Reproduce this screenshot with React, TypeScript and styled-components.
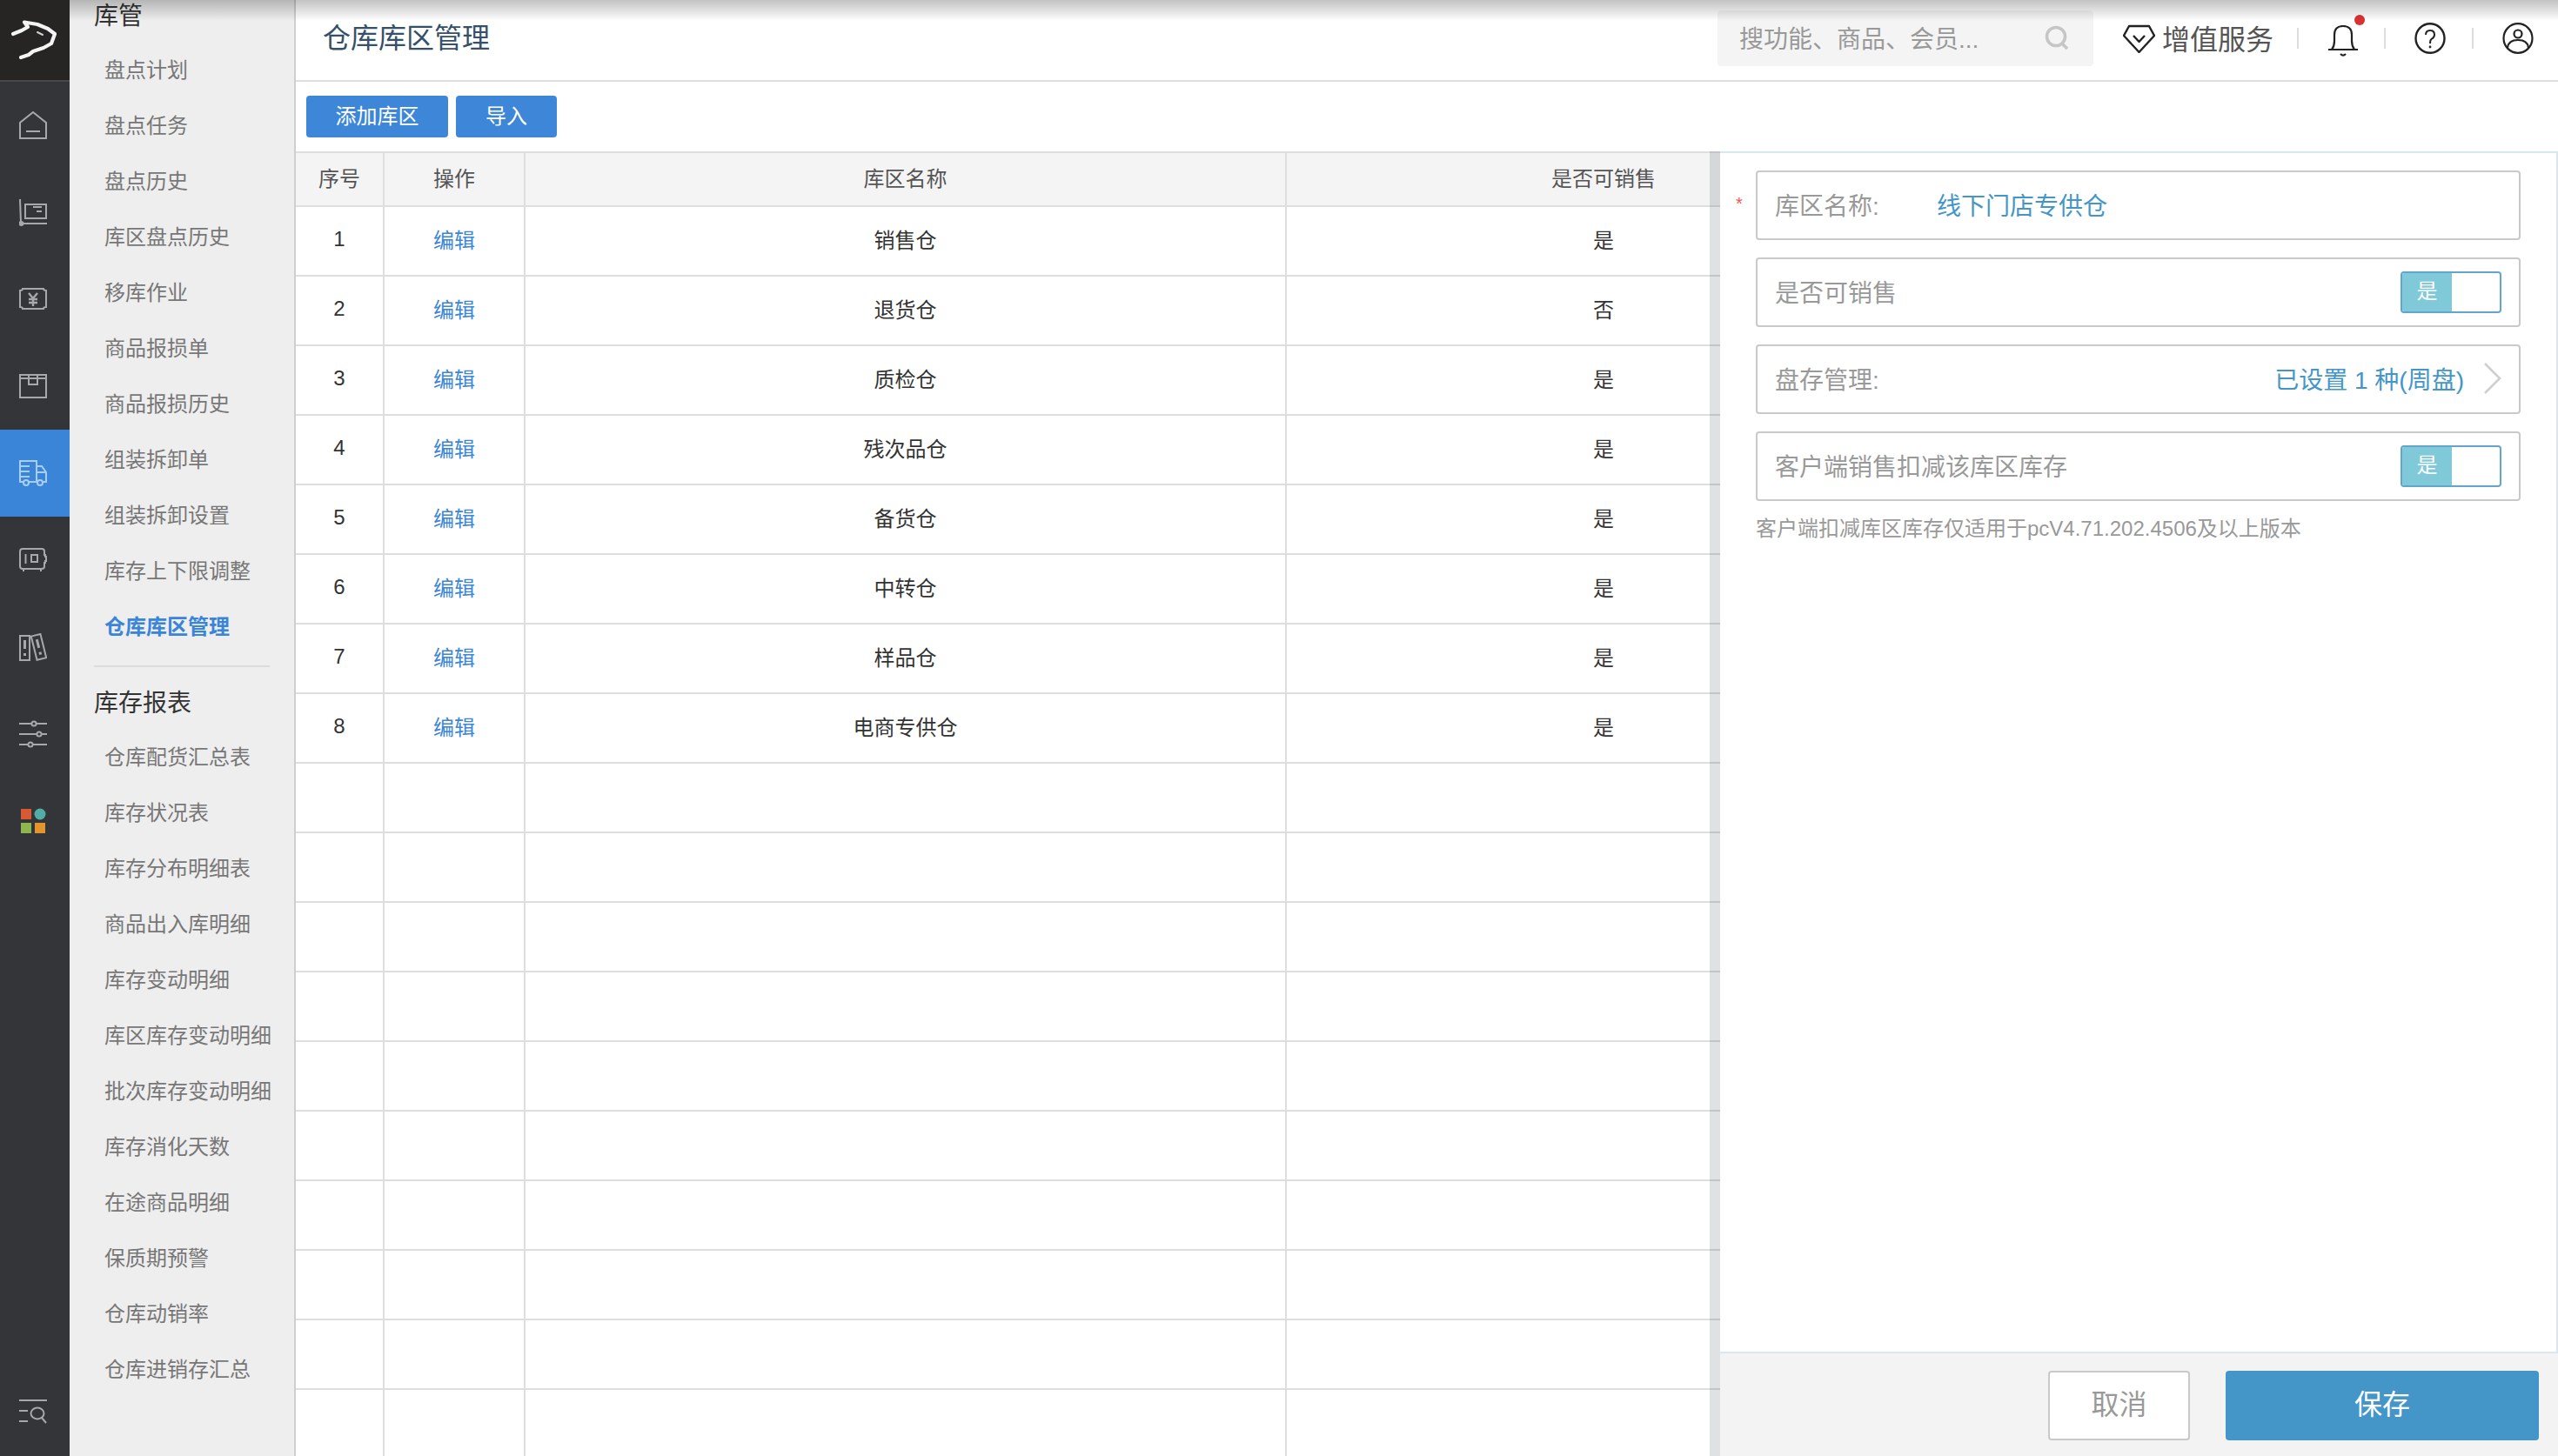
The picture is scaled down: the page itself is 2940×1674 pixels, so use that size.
import React from 'react'
import styled, { createGlobalStyle } from 'styled-components'

const GlobalStyle = createGlobalStyle`
  html, body {
    margin: 0;
    padding: 0;
    background: #fff;
  }
  * {
    box-sizing: border-box;
  }
  body {
    font-family: "Liberation Sans", "Noto Sans CJK SC", sans-serif;
    color: #333;
  }
`

const Page = styled.div`
  display: flex;
  width: 2940px;
  height: 1674px;
  overflow: hidden;
`

const Rail = styled.nav`
  display: flex;
  flex-direction: column;
  flex: 0 0 80px;
  background: #333538;
`

const LogoBox = styled.div`
  display: flex;
  height: 94px;
  background: #262523;
  border-bottom: 2px solid #47484a;
`

const RailItem = styled.div<{ $active?: boolean; $bottom?: boolean }>`
  display: flex;
  align-items: center;
  justify-content: center;
  height: 100px;
  padding-right: 4px;
  margin-top: ${({ $bottom }) => ($bottom ? 'auto' : '0')};
  color: ${({ $active }) => ($active ? '#a9cef3' : '#a6a8aa')};
  background: ${({ $active }) => ($active ? '#3b85d8' : 'transparent')};
`

const Content = styled.div`
  position: relative;
  display: flex;
  flex: 1;
  min-width: 0;

  &::before {
    content: '';
    position: absolute;
    top: 0;
    left: 0;
    right: 0;
    height: 24px;
    background: linear-gradient(to bottom, rgba(0, 0, 0, 0.24), rgba(0, 0, 0, 0));
    pointer-events: none;
    z-index: 2;
  }
`

const Menu = styled.aside`
  flex: 0 0 260px;
  padding-left: 28px;
  background: #eee;
  border-right: 2px solid #cfcfcf;
  overflow: hidden;
`

const MenuTitle = styled.div`
  height: 34px;
  margin-bottom: 15px;
  font-size: 28px;
  line-height: 38px;
  color: #333;
`

const MenuItem = styled.div<{ $active?: boolean }>`
  height: 64px;
  padding-left: 12px;
  font-size: 24px;
  line-height: 64px;
  white-space: nowrap;
  color: ${({ $active }) => ($active ? '#3a85d8' : '#777')};
  font-weight: ${({ $active }) => ($active ? 600 : 400)};
`

const MenuDivider = styled.div`
  width: 202px;
  height: 2px;
  margin: 12px 0 23px;
  background: #dcdcdc;
`

const Main = styled.main`
  display: flex;
  flex-direction: column;
  flex: 1;
  min-width: 0;
`

const Header = styled.header`
  display: flex;
  align-items: center;
  flex: 0 0 94px;
  padding: 0 28px 4px 31px;
  border-bottom: 2px solid #dedede;
`

const Title = styled.h1`
  margin: 0 0 7px;
  font-size: 32px;
  font-weight: 400;
  color: #34506a;
`

const SearchBox = styled.div`
  display: flex;
  align-items: center;
  justify-content: space-between;
  width: 432px;
  height: 64px;
  margin-left: auto;
  padding: 0 28px 3px 25px;
  background: #f4f4f4;
  border-radius: 4px;
  font-size: 28px;
  color: #999;
`

const Upgrade = styled.div`
  display: flex;
  align-items: center;
  gap: 8px;
  margin-left: 34px;
  font-size: 32px;
  color: #555;
  white-space: nowrap;
`

const UpgradeLabel = styled.span`
  padding-bottom: 3px;
`

const HeaderDivider = styled.span<{ $after?: number }>`
  flex: 0 0 2px;
  height: 24px;
  margin: 0 33px 0 ${({ $after }) => $after ?? 29}px;
  background: #ddd;
`

const BellWrap = styled.div`
  position: relative;
  display: flex;
  margin-top: 6px;
`

const RedDot = styled.span`
  position: absolute;
  top: -12px;
  right: -7px;
  width: 12px;
  height: 12px;
  border-radius: 50%;
  background: #dc3232;
`

const Toolbar = styled.div`
  display: flex;
  align-items: flex-start;
  flex: 0 0 80px;
  gap: 9px;
  padding: 16px 0 0 12px;
`

const ToolButton = styled.button<{ $width: number }>`
  width: ${({ $width }) => $width}px;
  height: 48px;
  padding: 0 0 5px;
  border: 0;
  border-radius: 4px;
  background: #3d86d8;
  color: #fff;
  font-family: inherit;
  font-size: 24px;
`

const Workspace = styled.div`
  display: flex;
  flex: 1;
  min-height: 0;
`

const TablePane = styled.div`
  position: relative;
  flex: 0 0 1637px;
  overflow: hidden;
`

const Grid = styled.table`
  width: 1868px;
  table-layout: fixed;
  border-collapse: collapse;
  font-size: 24px;
`

const Col = styled.col<{ $width: number }>`
  width: ${({ $width }) => $width}px;
`

const HeadCell = styled.th`
  height: 62px;
  padding: 0 0 5px;
  background: #f4f4f4;
  border: 2px solid #dedede;
  font-weight: 400;
  color: #555;
  text-align: center;

  &:first-child {
    border-left: 0;
  }
`

const Cell = styled.td`
  height: 80px;
  padding: 0 0 5px;
  border: 2px solid #dedede;
  text-align: center;
  color: #333;

  &:first-child {
    border-left: 0;
  }
`

const EditLink = styled.a`
  color: #3d86d8;
`

/* the drag bar is translucent, the table's lines show through it */
const Splitter = styled.div`
  position: absolute;
  top: 0;
  right: 0;
  bottom: 0;
  width: 12px;
  background: rgba(0, 5, 15, 0.12);
`

const Panel = styled.section`
  display: flex;
  flex-direction: column;
  flex: 1;
  min-width: 0;
`

const FormArea = styled.div`
  display: flex;
  flex-direction: column;
  flex: 1;
  gap: 20px;
  padding: 20px 41px 0 41px;
  border: 2px solid #d9e7ef;
  border-left: 0;
`

const FieldRow = styled.div`
  position: relative;
  display: flex;
  align-items: center;
  height: 80px;
  padding: 0 20px 3px 20px;
  border: 2px solid #c9c9c9;
  border-radius: 4px;
  font-size: 28px;
  color: #999;
`

const Required = styled.span`
  position: absolute;
  left: -25px;
  top: 26px;
  font-size: 20px;
  line-height: 20px;
  color: #f25555;
`

const FieldLabel = styled.span`
  flex: 0 0 186px;
`

const FieldValue = styled.span<{ $end?: boolean }>`
  margin-left: ${({ $end }) => ($end ? 'auto' : '0')};
  color: #4496c8;
`

const ChevronSlot = styled.span`
  display: flex;
  margin-left: 23px;
`

const Toggle = styled.div`
  display: flex;
  width: 116px;
  height: 48px;
  margin: 3px 0 0 auto;
  border: 2px solid #62a6cb;
  border-radius: 4px;
  overflow: hidden;
  background: #fff;
`

const ToggleOn = styled.span`
  flex: 0 0 57px;
  background: #7fc9d9;
  color: #fff;
  font-size: 24px;
  line-height: 42px;
  text-align: center;
`

const Hint = styled.p`
  margin: -6px 0 0;
  font-size: 24px;
  line-height: 36px;
  color: #999;
  white-space: nowrap;
`

const Footer = styled.footer`
  display: flex;
  justify-content: flex-end;
  flex: 0 0 118px;
  gap: 41px;
  padding: 20px 22px 0 0;
  background: #f3f3f3;
`

const CancelButton = styled.button`
  width: 163px;
  height: 80px;
  padding: 0 0 8px;
  border: 2px solid #c9c9c9;
  border-radius: 4px;
  background: #fff;
  color: #999;
  font-family: inherit;
  font-size: 32px;
`

const SaveButton = styled.button`
  width: 360px;
  height: 80px;
  padding: 0 0 8px;
  border: 0;
  border-radius: 4px;
  background: #4496c8;
  color: #fff;
  font-family: inherit;
  font-size: 32px;
`

const LogoIcon = () => (
  <svg width="80" height="92" viewBox="0 0 80 92" fill="none">
    <path
      d="M15 39 L25 35 L32 31 L28 25.500 L43 28 L55 33 L63 39 L59 50 L50 55 L38 59 L33 63 L24 66"
      stroke="#f4f4f4"
      strokeWidth="4.200"
      strokeLinecap="round"
      strokeLinejoin="round"
    />
    <path d="M43 37 L49 40" stroke="#cfcfcf" strokeWidth="2" strokeLinecap="round" />
  </svg>
)

const HomeIcon = () => (
  <svg width="32" height="32" viewBox="0 0 32 32" fill="none" stroke="currentColor" strokeWidth="2">
    <path d="M16 1 L31 13 V31 H1 V13 Z" />
    <path d="M8 23 H24" />
  </svg>
)

const CartIcon = () => (
  <svg width="32" height="32" viewBox="0 0 32 32" fill="none" stroke="currentColor" strokeWidth="2">
    <path d="M1 1 L2 29 H32" />
    <circle cx="2.500" cy="29" r="2" />
    <rect x="7" y="7" width="24" height="16" />
    <path d="M16 10 H26 M20 15 H26" />
  </svg>
)

const MoneyIcon = () => (
  <svg width="32" height="32" viewBox="0 0 32 32" fill="none" stroke="currentColor" strokeWidth="2">
    <path d="M1 6 Q4 6 4 4 H28 Q28 6 31 6 V25 Q28 25 28 27 H4 Q4 25 1 25 Z" />
    <path d="M11 9 L16 15 L21 9 M11 16 H21 M11 20 H21 M16 15 V24" strokeWidth="2.400" />
  </svg>
)

const BoxIcon = () => (
  <svg width="32" height="32" viewBox="0 0 32 32" fill="none" stroke="currentColor" strokeWidth="2">
    <rect x="1" y="3" width="30" height="26" />
    <path d="M1 7 H31 M11 3 V14 H21 V3" />
  </svg>
)

const TruckIcon = () => (
  <svg width="32" height="32" viewBox="0 0 32 32" fill="none" stroke="currentColor" strokeWidth="2">
    <path d="M5 26 H1 V2 H20 V26 H11 M20 8 H26 L31 15 V26 H27 M21 26 H20" />
    <path d="M20 15 H31 M1 8 H12 M1 14 H12 M1 20 H12" />
    <circle cx="8" cy="27" r="3" />
    <circle cx="24" cy="27" r="3" />
  </svg>
)

const SafeIcon = () => (
  <svg width="32" height="32" viewBox="0 0 32 32" fill="none" stroke="currentColor" strokeWidth="2">
    <path d="M31 10 H29 V6 Q29 3 26 3 H4 Q1 3 1 6 V23 Q1 26 4 26 H26 Q29 26 29 23 V19 H31 M29 12 H31 V17 H29" />
    <path d="M7.500 9 V20 M5 26 V29 M25 26 V29" />
    <rect x="14" y="10" width="7" height="8" />
  </svg>
)

const BooksIcon = () => (
  <svg width="32" height="32" viewBox="0 0 32 32" fill="none" stroke="currentColor" strokeWidth="2">
    <rect x="1" y="3" width="11" height="28" />
    <path d="M6.500 8 V18 M6.500 23 V26" strokeWidth="3" />
    <g transform="rotate(-14 22 16)">
      <rect x="17" y="2" width="11" height="28" />
      <path d="M22.500 7 V17 M22.500 22 V25" strokeWidth="3" />
    </g>
  </svg>
)

const SlidersIcon = () => (
  <svg width="32" height="32" viewBox="0 0 32 32" fill="#333538" stroke="currentColor" strokeWidth="2">
    <path d="M0 4 H32 M0 16 H32 M0 28 H32" />
    <circle cx="17" cy="4" r="2.600" />
    <circle cx="23" cy="16" r="2.600" />
    <circle cx="13" cy="28" r="2.600" />
  </svg>
)

const AppsIcon = () => (
  <svg width="32" height="32" viewBox="0 0 32 32">
    <rect x="2" y="2" width="12" height="12" fill="#d85a33" />
    <circle cx="24" cy="8" r="6.500" fill="#51ada6" />
    <rect x="2" y="18" width="12" height="12" fill="#8db64e" />
    <rect x="18" y="18" width="12" height="12" fill="#e2952c" />
  </svg>
)

const MenuSearchIcon = () => (
  <svg width="32" height="32" viewBox="0 0 32 32" fill="none" stroke="currentColor" strokeWidth="2">
    <path d="M0 2 H32 M0 14 H10 M0 26 H10" />
    <ellipse cx="21" cy="17" rx="7.500" ry="6.500" />
    <path d="M26 22 L31 28" />
  </svg>
)

const SearchIcon = () => (
  <svg width="28" height="28" viewBox="0 0 28 28" fill="none" stroke="#c6c6c6" strokeWidth="3.600">
    <circle cx="13" cy="13" r="10.500" />
    <path d="M20 21 L26 27" />
  </svg>
)

const DiamondIcon = () => (
  <svg width="37" height="33" viewBox="0 0 37 33" fill="none" stroke="#222" strokeWidth="2.400" strokeLinejoin="round">
    <path d="M7 2 H30 L36 13 L18.500 32 L1 13 Z" />
    <path d="M12 13 L18.500 20 L25 13" />
  </svg>
)

const BellIcon = () => (
  <svg width="36" height="37" viewBox="0 0 36 37" fill="none" stroke="#222" strokeWidth="2.200">
    <path d="M1 28 H35 M5 28 Q8 24 8 18 V11 Q8 1 18 1 Q28 1 28 11 V18 Q28 24 31 28" />
    <path d="M15 33 Q18 36 21 33" />
  </svg>
)

const QuestionIcon = () => (
  <svg width="36" height="36" viewBox="0 0 36 36" fill="none" stroke="#222" strokeWidth="2.400">
    <ellipse cx="18" cy="18" rx="16.500" ry="16.800" />
    <path d="M13 14 Q13 9 18 9 Q23 9 23 14 Q23 17 19.500 19 Q18 20 18 24" strokeWidth="2" />
    <circle cx="18" cy="28" r="0.800" strokeWidth="1.200" />
  </svg>
)

const UserIcon = () => (
  <svg width="36" height="36" viewBox="0 0 36 36" fill="none" stroke="#222" strokeWidth="2.200">
    <ellipse cx="18" cy="18" rx="16.500" ry="16.800" />
    <circle cx="18" cy="13" r="4.500" />
    <path d="M6 29 Q7 20 18 20 Q29 20 30 29" />
  </svg>
)

const ChevronIcon = () => (
  <svg width="20" height="36" viewBox="0 0 20 36" fill="none" stroke="#cfcfcf" strokeWidth="2.600">
    <path d="M1 1 L18 18 L1 35" />
  </svg>
)

const railIcons = [HomeIcon, CartIcon, MoneyIcon, BoxIcon, TruckIcon, SafeIcon, BooksIcon, SlidersIcon, AppsIcon]

const manageMenu = [
  '盘点计划',
  '盘点任务',
  '盘点历史',
  '库区盘点历史',
  '移库作业',
  '商品报损单',
  '商品报损历史',
  '组装拆卸单',
  '组装拆卸设置',
  '库存上下限调整',
  '仓库库区管理',
]

const reportMenu = [
  '仓库配货汇总表',
  '库存状况表',
  '库存分布明细表',
  '商品出入库明细',
  '库存变动明细',
  '库区库存变动明细',
  '批次库存变动明细',
  '库存消化天数',
  '在途商品明细',
  '保质期预警',
  '仓库动销率',
  '仓库进销存汇总',
]

const rows = [
  { name: '销售仓', sale: '是' },
  { name: '退货仓', sale: '否' },
  { name: '质检仓', sale: '是' },
  { name: '残次品仓', sale: '是' },
  { name: '备货仓', sale: '是' },
  { name: '中转仓', sale: '是' },
  { name: '样品仓', sale: '是' },
  { name: '电商专供仓', sale: '是' },
]

const EMPTY_ROWS = 10

export default function App() {
  return (
    <Page>
      <GlobalStyle />
      <Rail>
        <LogoBox>
          <LogoIcon />
        </LogoBox>
        {railIcons.map((Icon, i) => (
          <RailItem key={i} $active={i === 4}>
            <Icon />
          </RailItem>
        ))}
        <RailItem $bottom>
          <MenuSearchIcon />
        </RailItem>
      </Rail>
      <Content>
        <Menu>
          <MenuTitle>库管</MenuTitle>
          {manageMenu.map((item) => (
            <MenuItem key={item} $active={item === '仓库库区管理'}>
              {item}
            </MenuItem>
          ))}
          <MenuDivider />
          <MenuTitle>库存报表</MenuTitle>
          {reportMenu.map((item) => (
            <MenuItem key={item}>{item}</MenuItem>
          ))}
        </Menu>
        <Main>
          <Header>
            <Title>仓库库区管理</Title>
            <SearchBox>
              搜功能、商品、会员...
              <SearchIcon />
            </SearchBox>
            <Upgrade>
              <DiamondIcon />
              <UpgradeLabel>增值服务</UpgradeLabel>
            </Upgrade>
            <HeaderDivider $after={27} />
            <BellWrap>
              <BellIcon />
              <RedDot />
            </BellWrap>
            <HeaderDivider />
            <QuestionIcon />
            <HeaderDivider $after={30} />
            <UserIcon />
          </Header>
          <Toolbar>
            <ToolButton $width={163}>添加库区</ToolButton>
            <ToolButton $width={116}>导入</ToolButton>
          </Toolbar>
          <Workspace>
            <TablePane>
              <Grid>
                <colgroup>
                  <Col $width={101} />
                  <Col $width={162} />
                  <Col $width={875} />
                  <Col $width={730} />
                </colgroup>
                <thead>
                  <tr>
                    <HeadCell>序号</HeadCell>
                    <HeadCell>操作</HeadCell>
                    <HeadCell>库区名称</HeadCell>
                    <HeadCell>是否可销售</HeadCell>
                  </tr>
                </thead>
                <tbody>
                  {rows.map((row, i) => (
                    <tr key={row.name}>
                      <Cell>{i + 1}</Cell>
                      <Cell>
                        <EditLink>编辑</EditLink>
                      </Cell>
                      <Cell>{row.name}</Cell>
                      <Cell>{row.sale}</Cell>
                    </tr>
                  ))}
                  {Array.from({ length: EMPTY_ROWS }, (_, i) => (
                    <tr key={i}>
                      <Cell />
                      <Cell />
                      <Cell />
                      <Cell />
                    </tr>
                  ))}
                </tbody>
              </Grid>
              <Splitter />
            </TablePane>
            <Panel>
              <FormArea>
                <FieldRow>
                  <Required>*</Required>
                  <FieldLabel>库区名称:</FieldLabel>
                  <FieldValue>线下门店专供仓</FieldValue>
                </FieldRow>
                <FieldRow>
                  是否可销售
                  <Toggle>
                    <ToggleOn>是</ToggleOn>
                  </Toggle>
                </FieldRow>
                <FieldRow>
                  盘存管理:
                  <FieldValue $end>已设置 1 种(周盘)</FieldValue>
                  <ChevronSlot>
                    <ChevronIcon />
                  </ChevronSlot>
                </FieldRow>
                <FieldRow>
                  客户端销售扣减该库区库存
                  <Toggle>
                    <ToggleOn>是</ToggleOn>
                  </Toggle>
                </FieldRow>
                <Hint>客户端扣减库区库存仅适用于pcV4.71.202.4506及以上版本</Hint>
              </FormArea>
              <Footer>
                <CancelButton>取消</CancelButton>
                <SaveButton>保存</SaveButton>
              </Footer>
            </Panel>
          </Workspace>
        </Main>
      </Content>
    </Page>
  )
}
